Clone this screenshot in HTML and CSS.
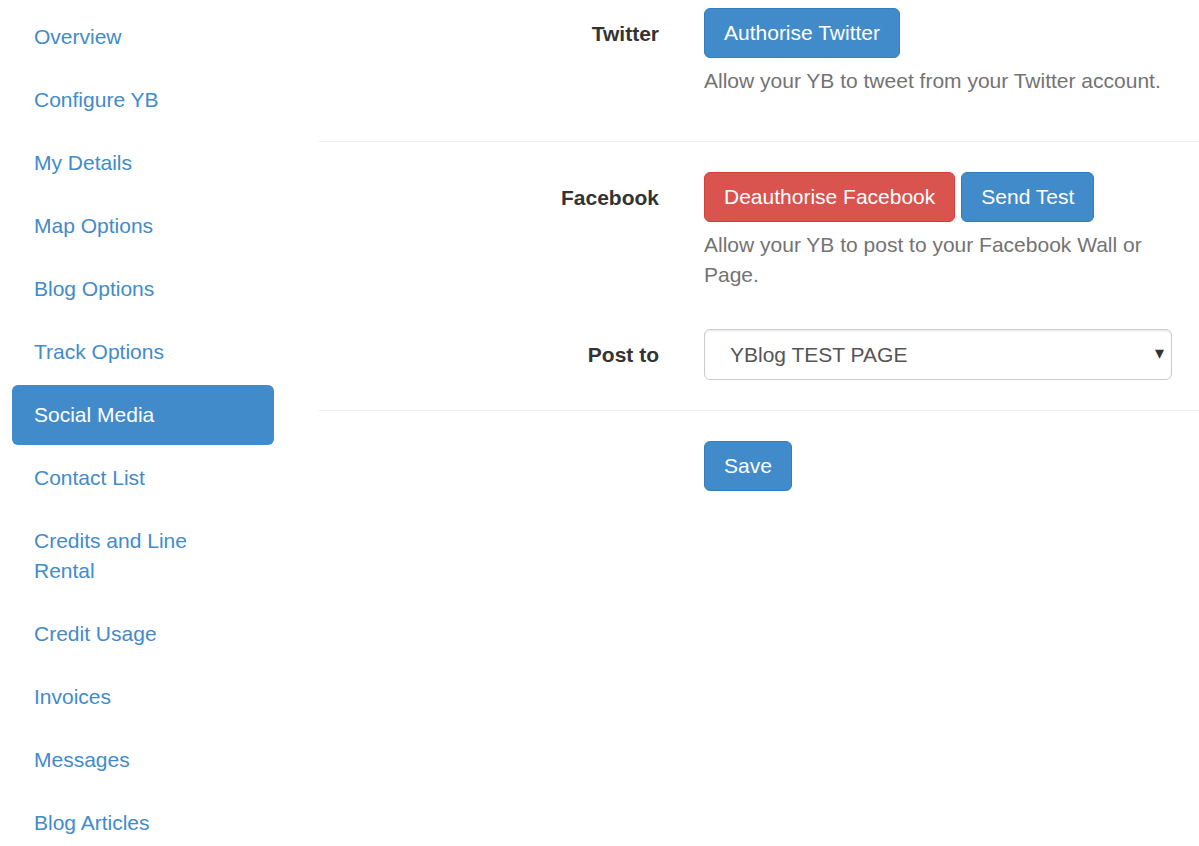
FILE: index.html
```html
<!DOCTYPE html>
<html lang="en">
<head>
  <meta charset="UTF-8" />
  <meta name="viewport" content="width=device-width, initial-scale=1.0" />
  <title>Social Media Settings</title>
  <link rel="stylesheet" href="styles.css">
</head>
<body>
  <div class="page">
    <div class="sidebar">
      <ul class="nav-pills">
        <li><a href="#">Overview</a></li>
        <li><a href="#">Configure YB</a></li>
        <li><a href="#">My Details</a></li>
        <li><a href="#">Map Options</a></li>
        <li><a href="#">Blog Options</a></li>
        <li><a href="#">Track Options</a></li>
        <li class="active"><a href="#">Social Media</a></li>
        <li><a href="#">Contact List</a></li>
        <li><a href="#">Credits and Line Rental</a></li>
        <li><a href="#">Credit Usage</a></li>
        <li><a href="#">Invoices</a></li>
        <li><a href="#">Messages</a></li>
        <li><a href="#">Blog Articles</a></li>
      </ul>
    </div>

    <div class="main">
      <div class="form-group">
        <label class="control-label">Twitter</label>
        <div class="controls">
          <button class="btn btn-primary">Authorise Twitter</button>
          <p class="help-block">Allow your YB to tweet from your Twitter account.</p>
        </div>
      </div>

      <hr>

      <div class="form-group">
        <label class="control-label">Facebook</label>
        <div class="controls">
          <div class="btn-row">
            <button class="btn btn-danger">Deauthorise Facebook</button>
            <button class="btn btn-primary">Send Test</button>
          </div>
          <p class="help-block">Allow your YB to post to your Facebook Wall or Page.</p>
        </div>
      </div>

      <div class="form-group">
        <label class="control-label">Post to</label>
        <div class="controls">
          <div class="select-wrap">
            <select class="form-control">
              <option>YBlog TEST PAGE</option>
            </select>
          </div>
        </div>
      </div>

      <hr class="hr-bottom">

      <div class="form-group">
        <div class="control-label"></div>
        <div class="controls">
          <button class="btn btn-primary">Save</button>
        </div>
      </div>
    </div>
  </div>
</body>
</html>
```

FILE: styles.css
```css
body {
  margin: 0;
  font-family: "Liberation Sans", Arial, sans-serif;
  font-size: 21px;
  line-height: 30px;
  color: #333;
  background: #fff;
}
.page {
  display: flex;
  padding-top: 7px;
}
.sidebar {
  width: 262px;
  padding-left: 12px;
  flex-shrink: 0;
}
.nav-pills {
  list-style: none;
  margin: 0;
  padding: 0;
}
.nav-pills li + li {
  margin-top: 3px;
}
.nav-pills a {
  display: block;
  padding: 15px 22px;
  color: #428bca;
  text-decoration: none;
  border-radius: 6px;
}
.nav-pills .active a {
  background: #428bca;
  color: #fff;
}
.main {
  margin-left: 45px;
  width: 880px;
  padding-top: 1px;
}
.form-group {
  display: flex;
  gap: 45px;
}
.control-label {
  width: 340px;
  flex-shrink: 0;
  text-align: right;
  font-weight: bold;
  padding-top: 10.5px;
}
.controls {
  width: 468px;
}
.btn-row {
  display: flex;
  gap: 6px;
}
.btn {
  font-family: inherit;
  font-size: 21px;
  line-height: 30px;
  padding: 9px 19px;
  border: 1.5px solid transparent;
  border-radius: 6px;
  color: #fff;
  cursor: pointer;
}
.btn-primary {
  background: #428bca;
  border-color: #357ebd;
}
.btn-danger {
  background: #d9534f;
  border-color: #d43f3a;
}
.help-block {
  margin: 7.5px 0 15px;
  color: #737373;
}
hr {
  margin: 30px 0 30.5px;
  border: 0;
  border-top: 1.5px solid #eee;
}
.hr-bottom {
  margin-bottom: 29.5px;
}
.form-group + .form-group {
  margin-top: 24.5px;
}
.select-wrap {
  position: relative;
}
.select-wrap::after {
  content: "\25BE";
  position: absolute;
  right: 8px;
  top: 9px;
  font-size: 18px;
  color: #333;
  pointer-events: none;
}
.form-control {
  display: block;
  width: 100%;
  height: 51px;
  padding: 9px 18px 9px 25px;
  font-family: inherit;
  font-size: 21px;
  color: #555;
  background: #fff;
  border: 1.5px solid #ccc;
  border-radius: 6px;
  box-shadow: inset 0 1.5px 1.5px rgba(0, 0, 0, 0.075);
  appearance: none;
  -webkit-appearance: none;
}
```
